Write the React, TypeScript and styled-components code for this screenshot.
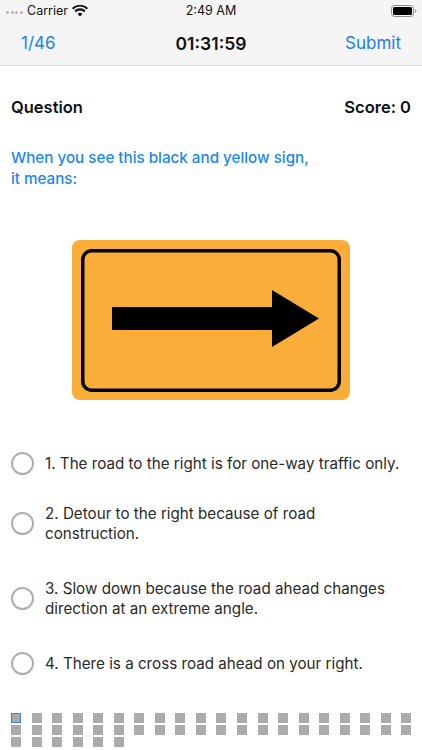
import React from 'react';
import styled, { createGlobalStyle } from 'styled-components';

const GlobalStyle = createGlobalStyle`
  html, body {
    margin: 0;
    padding: 0;
    background: #fff;
  }
  body {
    font-family: Inter, "Liberation Sans", sans-serif;
  }
`;

const Screen = styled.div`
  width: 422px;
  height: 750px;
  overflow: hidden;
  display: flex;
  flex-direction: column;
  background: #fff;
`;

const TopBars = styled.header`
  height: 65px;
  background: #f6f5f6;
  border-bottom: 1px solid #dcdcdc;
  flex-shrink: 0;
`;

const StatusBar = styled.div`
  height: 21px;
  display: grid;
  grid-template-columns: 1fr auto 1fr;
  align-items: center;
  padding: 0 6px;
  font-size: 12.5px;
  color: #111;
`;

const StatusLeft = styled.div`
  display: flex;
  align-items: center;
  gap: 4.5px;
`;

const SignalDots = styled.div`
  display: flex;
  gap: 1.5px;
  margin-top: 4px;
`;

const Dot = styled.span`
  width: 3px;
  height: 3px;
  border-radius: 50%;
  background: #b5b5b5;
`;

const StatusRight = styled.div`
  display: flex;
  justify-content: flex-end;
  margin-right: -1px;
`;

const NavBar = styled.nav`
  height: 44px;
  display: grid;
  grid-template-columns: 1fr auto 1fr;
  align-items: center;
  padding: 0 21px;
`;

const NavLink = styled.span<{ $end?: boolean }>`
  font-size: 17px;
  color: #2180e6;
  text-align: ${p => (p.$end ? 'right' : 'left')};
`;

const Timer = styled.span`
  font-size: 17.5px;
  font-weight: 600;
  color: #111;
`;

const Content = styled.main`
  flex: 1;
  display: flex;
  flex-direction: column;
  padding: 0 11px;
`;

const ScoreRow = styled.div`
  display: flex;
  justify-content: space-between;
  align-items: center;
  margin-top: 30px;
  font-size: 16.5px;
  font-weight: 600;
  line-height: 22px;
  color: #111;
`;

const Prompt = styled.h2`
  margin: 29px 0 0;
  font-size: 15.2px;
  font-weight: 500;
  line-height: 21px;
  color: #1c87ea;
`;

const SignWrap = styled.div`
  display: flex;
  justify-content: center;
  margin-top: 51px;
`;

const Options = styled.ul`
  list-style: none;
  margin: 41px 0 0;
  padding: 0;
  display: flex;
  flex-direction: column;
`;

const Option = styled.li<{ $height: number }>`
  height: ${p => p.$height}px;
  display: flex;
  align-items: center;
  gap: 11px;
  font-size: 15.2px;
  line-height: 20px;
  color: #2a2a2a;
`;

const Radio = styled.span`
  width: 23px;
  height: 23px;
  box-sizing: border-box;
  border: 2px solid #aeaeae;
  border-radius: 50%;
  flex-shrink: 0;
`;

const Progress = styled.div`
  margin-top: 22px;
  display: grid;
  grid-template-columns: repeat(20, 10px);
  column-gap: 10.55px;
  row-gap: 2px;
`;

const Cell = styled.span<{ $current?: boolean }>`
  width: 10px;
  height: 10px;
  box-sizing: border-box;
  background: #ababab;
  border: ${p => (p.$current ? '1px solid #3a82d8' : 'none')};
`;

const WifiIcon = () => (
  <svg width="16" height="12" viewBox="0 0 16 12" aria-hidden="true">
    <path
      d="M8 11.5 5.6 8.9a3.5 3.5 0 0 1 4.8 0ZM3.9 7.2 2.4 5.6a8 8 0 0 1 11.2 0l-1.5 1.6a5.9 5.9 0 0 0-8.2 0ZM1.2 4.4 0 3.1a11.4 11.4 0 0 1 16 0l-1.2 1.3a9.7 9.7 0 0 0-13.6 0Z"
      fill="#111"
    />
  </svg>
);

const BatteryIcon = () => (
  <svg width="26" height="12" viewBox="0 0 26 12" aria-hidden="true">
    <rect x="0.5" y="0.5" width="22" height="11" rx="3" fill="none" stroke="#8c8c8c" />
    <rect x="2" y="2" width="19" height="8" rx="1.6" fill="#000" />
    <path d="M24 4.2c.9.3 1.4 1 1.4 1.8s-.5 1.5-1.4 1.8Z" fill="#9a9a9a" />
  </svg>
);

const RoadSign = () => (
  <svg width="278" height="160" viewBox="0 0 278 160" role="img" aria-label="Black and yellow arrow sign">
    <rect width="278" height="160" rx="8" fill="#fbad3a" />
    <rect x="10.75" y="10.75" width="256.5" height="139.5" rx="9" fill="none" stroke="#000" strokeWidth="3.5" />
    <path d="M40 67H200V50L247 78.5 200 107V90H40Z" fill="#000" />
  </svg>
);

const options = [
  { text: '1. The road to the right is for one-way traffic only.', height: 45 },
  { text: '2. Detour to the right because of road construction.', height: 75 },
  { text: '3. Slow down because the road ahead changes direction at an extreme angle.', height: 75 },
  { text: '4. There is a cross road ahead on your right.', height: 55 },
];

const App: React.FC = () => {
  return (
    <Screen>
      <GlobalStyle />
      <TopBars>
        <StatusBar>
          <StatusLeft>
            <SignalDots>
              <Dot />
              <Dot />
              <Dot />
              <Dot />
            </SignalDots>
            <span>Carrier</span>
            <WifiIcon />
          </StatusLeft>
          <span>2:49 AM</span>
          <StatusRight>
            <BatteryIcon />
          </StatusRight>
        </StatusBar>
        <NavBar>
          <NavLink>1/46</NavLink>
          <Timer>01:31:59</Timer>
          <NavLink $end>Submit</NavLink>
        </NavBar>
      </TopBars>
      <Content>
        <ScoreRow>
          <span>Question</span>
          <span>Score: 0</span>
        </ScoreRow>
        <Prompt>
          When you see this black and yellow sign,
          <br />
          it means:
        </Prompt>
        <SignWrap>
          <RoadSign />
        </SignWrap>
        <Options>
          {options.map(option => (
            <Option key={option.text} $height={option.height}>
              <Radio />
              <span>{option.text}</span>
            </Option>
          ))}
        </Options>
        <Progress>
          {Array.from({ length: 46 }, (_, i) => (
            <Cell key={i} $current={i === 0} />
          ))}
        </Progress>
      </Content>
    </Screen>
  );
};

export default App;
